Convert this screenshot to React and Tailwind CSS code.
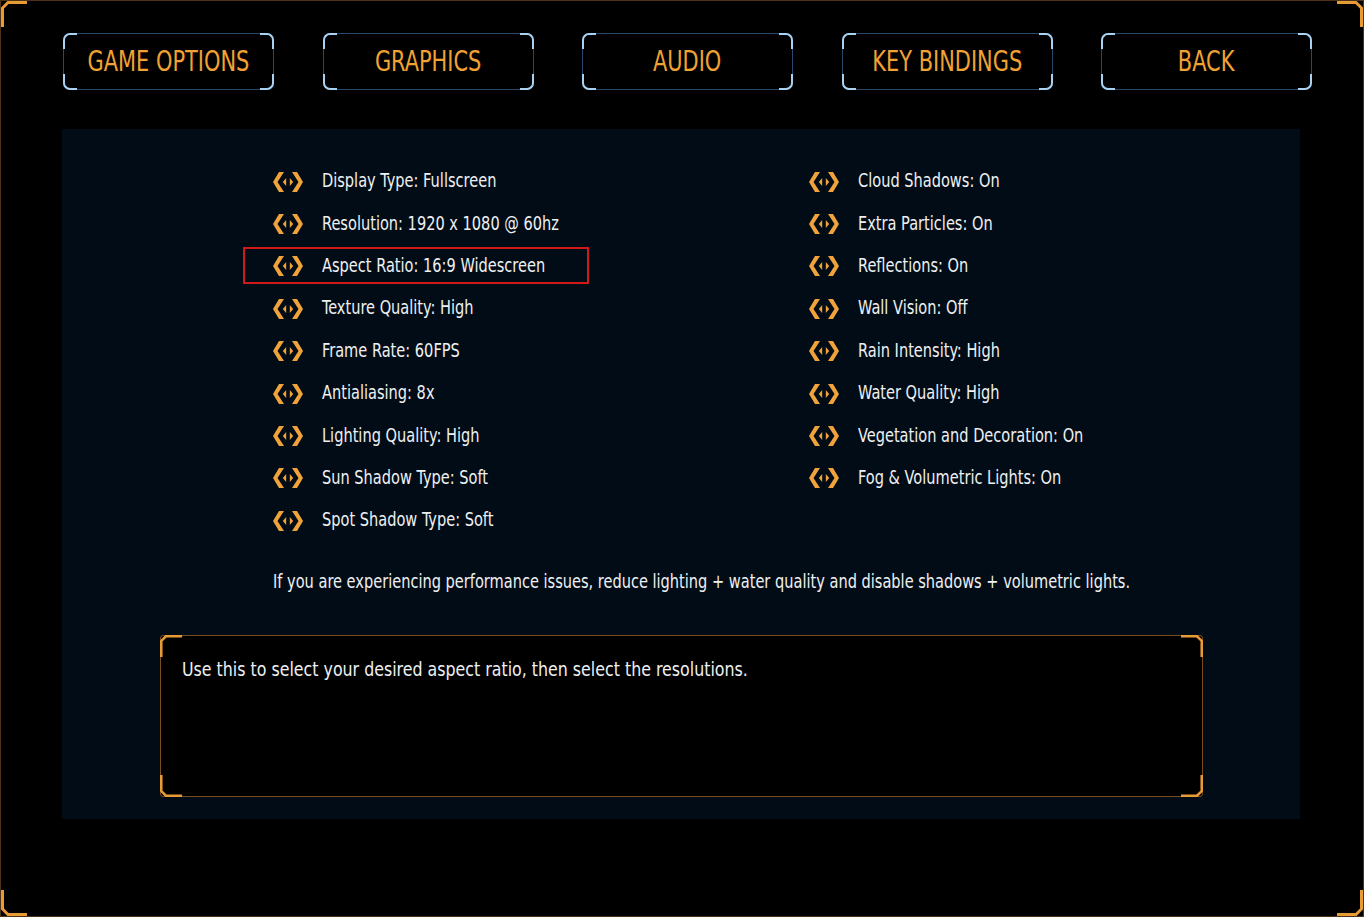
import React from 'react';

const FONT = "font-['DejaVu_Sans_Condensed','DejaVu_Sans',sans-serif] font-stretch-condensed";

const NAV = ['GAME OPTIONS', 'GRAPHICS', 'AUDIO', 'KEY BINDINGS', 'BACK'];

const LEFT = [
  'Display Type: Fullscreen',
  'Resolution: 1920 x 1080 @ 60hz',
  'Aspect Ratio: 16:9 Widescreen',
  'Texture Quality: High',
  'Frame Rate: 60FPS',
  'Antialiasing: 8x',
  'Lighting Quality: High',
  'Sun Shadow Type: Soft',
  'Spot Shadow Type: Soft',
];

const RIGHT = [
  'Cloud Shadows: On',
  'Extra Particles: On',
  'Reflections: On',
  'Wall Vision: Off',
  'Rain Intensity: High',
  'Water Quality: High',
  'Vegetation and Decoration: On',
  'Fog & Volumetric Lights: On',
];

// orange chamfered corner piece, rotated per corner
const Corner = ({ className, size = 26 }) => (
  <svg width={size} height={size} viewBox="0 0 26 26" className={`absolute ${className}`}>
    <path d="M1.5 26 V7 L7 1.5 H26" fill="none" stroke="#e89a35" strokeWidth="3" />
  </svg>
);

const ArrowIcon = () => (
  <svg width="30" height="20" viewBox="0 0 30 20" className="shrink-0 mt-[3px]">
    <polygon points="6,0 11,0 4.5,10 11,20 6,20 0,10" fill="#f0a33a" />
    <polygon points="13.2,6 13.2,14 9.8,10" fill="#f0a33a" />
    <polygon points="24,0 19,0 25.5,10 19,20 24,20 30,10" fill="#f0a33a" />
    <polygon points="16.8,6 16.8,14 20.2,10" fill="#f0a33a" />
  </svg>
);

const NavButton = ({ label }) => (
  <button className="relative w-[211px] h-[57px] rounded-[7px] border border-[#28486a] bg-black flex items-center justify-center">
    <span className="absolute -left-px -top-px w-[14px] h-[16px] border-l-2 border-t-2 border-[#a9d2f2] rounded-tl-[7px]" />
    <span className="absolute -right-px -top-px w-[14px] h-[16px] border-r-2 border-t-2 border-[#a9d2f2] rounded-tr-[7px]" />
    <span className="absolute -left-px -bottom-px w-[14px] h-[16px] border-l-2 border-b-2 border-[#a9d2f2] rounded-bl-[7px]" />
    <span className="absolute -right-px -bottom-px w-[14px] h-[16px] border-r-2 border-b-2 border-[#a9d2f2] rounded-br-[7px]" />
    <span className="inline-block text-[28px] text-[#f0a232] leading-none scale-x-[0.83] whitespace-nowrap">{label}</span>
  </button>
);

const OptionRow = ({ label, selected }) => (
  <div className="relative flex items-center gap-[19px] h-[42.4px]">
    {selected && <span className="absolute -left-[30px] top-[3px] w-[346px] h-[37px] border-2 border-[#d01a1a]" />}
    <ArrowIcon />
    <span className="inline-block origin-left scale-x-[0.81] whitespace-nowrap text-[20px] text-[#eef0f2] leading-none">{label}</span>
  </div>
);

export default function App() {
  return (
    <div className={`relative w-[1364px] h-[917px] bg-black border border-[#4d3418] ${FONT} overflow-hidden`}>
      <Corner className="left-0 top-0" />
      <Corner className="right-0 top-0 rotate-90" />
      <Corner className="right-0 bottom-0 rotate-180" />
      <Corner className="left-0 bottom-0 -rotate-90" />

      <nav className="flex gap-[48.5px] pl-[62px] pt-[32px]">
        {NAV.map(n => <NavButton key={n} label={n} />)}
      </nav>

      <section className="ml-[61px] mt-[39px] w-[1238px] h-[690px] bg-[#020c16] pt-[30px]">
        <div className="flex pl-[211px]">
          <div className="w-[536px] flex flex-col">
            {LEFT.map((l, i) => <OptionRow key={l} label={l} selected={i === 2} />)}
          </div>
          <div className="flex flex-col">
            {RIGHT.map(r => <OptionRow key={r} label={r} />)}
          </div>
        </div>

        <p className="pl-[211px] mt-[29px] h-[22px] text-[20px] leading-[22px] text-[#eef0f2] whitespace-nowrap">
          <span className="inline-block origin-left scale-x-[0.81]">
            If you are experiencing performance issues, reduce lighting + water quality and disable shadows + volumetric lights.
          </span>
        </p>

        <div className="relative ml-[98px] mt-[43px] w-[1043px] h-[162px] bg-black border border-[#7a4e1c] rounded-[3px] pl-[21px] pt-[22px]">
          <Corner className="-left-px -top-px" size={22} />
          <Corner className="-right-px -top-px rotate-90" size={22} />
          <Corner className="-right-px -bottom-px rotate-180" size={22} />
          <Corner className="-left-px -bottom-px -rotate-90" size={22} />
          <p className="text-[20px] leading-[22px] text-[#eef0f2] whitespace-nowrap">
            <span className="inline-block origin-left scale-x-[0.88]">
              Use this to select your desired aspect ratio, then select the resolutions.
            </span>
          </p>
        </div>
      </section>
    </div>
  );
}
